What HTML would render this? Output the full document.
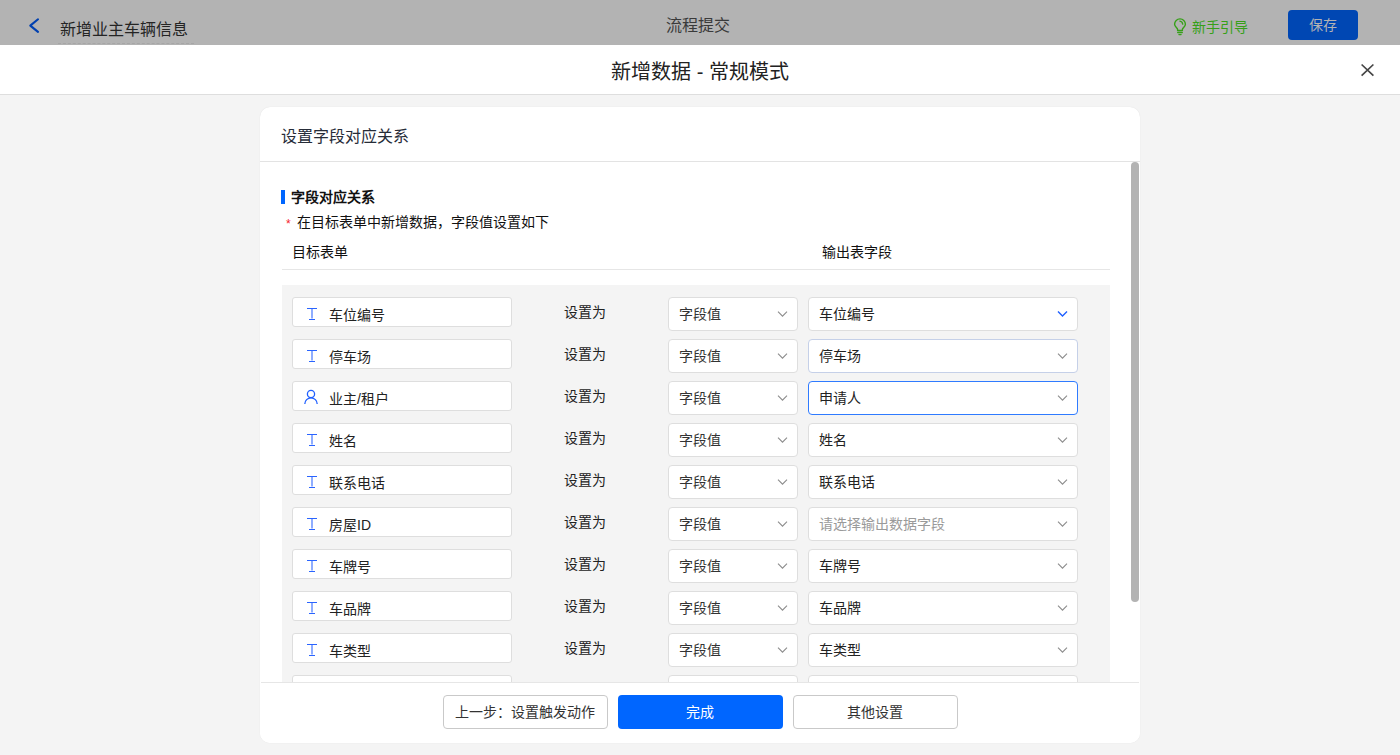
<!DOCTYPE html>
<html lang="zh-CN"><head><meta charset="utf-8">
<style>
*{box-sizing:border-box;margin:0;padding:0}
html,body{width:1400px;height:755px;overflow:hidden}
body{position:relative;background:#f4f4f4;font-family:"Liberation Sans",sans-serif;color:#333;font-size:14px}
.abs{position:absolute}
.t{position:absolute;white-space:nowrap;line-height:20px}
#top{left:0;top:0;width:1400px;height:45px;background:#b3b3b3}
#hdr{left:0;top:45px;width:1400px;height:50px;background:#fff;border-bottom:1px solid #dedede}
#card{left:260px;top:107px;width:880px;height:636px;background:#fff;border-radius:10px;box-shadow:0 0 1px rgba(0,0,0,.12)}
.inp{position:absolute;left:292px;width:220px;height:30px;background:#fff;border:1px solid #dedede;border-radius:3px}
.sel{position:absolute;height:34px;background:#fff;border:1px solid #dedede;border-radius:4px}
.chev{position:absolute;width:10px;height:6px}
.btn{position:absolute;top:695px;height:34px;width:165px;border-radius:4px;text-align:center;line-height:32px;font-size:14px;padding-right:2px}
</style></head>
<body>
<div id="top" class="abs">
  <svg class="abs" style="left:28px;top:17px" width="12" height="17" viewBox="0 0 12 17"><path d="M10 2.3 L2.3 8.6 L10 14.9" fill="none" stroke="#0040b0" stroke-width="2.1" stroke-linecap="round" stroke-linejoin="round"/></svg>
  <div class="t" style="left:60px;top:19px;font-size:16px;line-height:22px;color:#242424">新增业主车辆信息</div>
  <div class="abs" style="left:58px;top:43px;width:136px;height:0;border-top:1px dashed #a6a6a6"></div>
  <div class="t" style="left:666px;top:15px;font-size:16px;line-height:22px;color:#3a3a3a">流程提交</div>
  <svg class="abs" style="left:1168px;top:14px" width="24" height="24" viewBox="0 0 24 24"><path d="M9.6 16.5 V15.6 C9.6 13.9 6.6 13 6.6 10.3 A5.4 5.4 0 0 1 17.4 10.3 C17.4 13 14.4 13.9 14.4 15.6 V16.5 Z" fill="none" stroke="#36a018" stroke-width="1.4" stroke-linejoin="round"/><path d="M9.7 18.5 H14.3 M10.9 20.6 H13.1" stroke="#36a018" stroke-width="1.3" stroke-linecap="round"/><path d="M11.9 7.2 A3.3 3.3 0 0 1 14.7 10.2" fill="none" stroke="#36a018" stroke-width="1.3" stroke-linecap="round"/></svg>
  <div class="t" style="left:1192px;top:17px;font-size:14px;color:#36a018">新手引导</div>
  <div class="abs" style="left:1288px;top:10px;width:70px;height:30px;background:#0047b3;border-radius:4px;color:#b3b3b3;text-align:center;line-height:30px;font-size:14px">保存</div>
</div>
<div id="hdr" class="abs">
  <div class="t" style="left:0;width:1400px;text-align:center;top:14px;font-size:20px;line-height:26px;color:#222">新增数据 - 常规模式</div>
  <svg class="abs" style="left:1360px;top:18px" width="15" height="14" viewBox="0 0 15 14"><path d="M1.6 1.5 L13.4 12.7 M13.4 1.5 L1.6 12.7" stroke="#464646" stroke-width="1.7"/></svg>
</div>
<div id="card" class="abs"></div>
<div class="t" style="left:281px;top:126px;font-size:16px;line-height:22px;color:#262c38">设置字段对应关系</div>
<div class="abs" style="left:260px;top:161px;width:880px;height:1px;background:#e3e3e3"></div>
<div class="abs" style="left:1131px;top:162px;width:8px;height:440px;border-radius:4px;background:#b3b3b3"></div>

<div class="abs" style="left:281px;top:190px;width:4px;height:14px;background:#0066ff"></div>
<div class="t" style="left:291px;top:187px;font-weight:bold;color:#111">字段对应关系</div>
<div class="t" style="left:286px;top:214px;color:#f5222d;font-size:12px">*</div>
<div class="t" style="left:297px;top:212px;color:#111">在目标表单中新增数据，字段值设置如下</div>
<div class="t" style="left:292px;top:242px;color:#111">目标表单</div>
<div class="t" style="left:822px;top:242px;color:#111">输出表字段</div>
<div class="abs" style="left:282px;top:269px;width:828px;height:1px;background:#e6e6e6"></div>
<div class="abs" style="left:282px;top:285px;width:828px;height:397px;background:#f4f4f4"></div>

<!--ROWS-->
<div class="inp" style="top:297px"></div>
<svg class="abs" style="left:306px;top:307px" width="12" height="14" viewBox="0 0 12 14"><path d="M1 1.5 H11 M6 1.5 V11.5 M3 12.5 H9" fill="none" stroke="#2a64ff" stroke-width="1.05"/></svg>
<div class="t" style="left:329px;top:305px;color:#222">车位编号</div>
<div class="t" style="left:564px;top:302px;color:#222">设置为</div>
<div class="sel" style="left:668px;top:297px;width:130px"></div>
<div class="sel" style="left:808px;top:297px;width:270px;border-color:#dedede"></div>
<div class="t" style="left:679px;top:304px">字段值</div>
<svg class="abs" style="left:777px;top:311px" width="11" height="7" viewBox="0 0 11 7"><path d="M1 0.6 L5.5 5.1 L10 0.6" fill="none" stroke="#8c8c8c" stroke-width="1.1"/></svg>
<div class="t" style="left:819px;top:304px;color:#222">车位编号</div>
<svg class="abs" style="left:1057px;top:311px" width="11" height="7" viewBox="0 0 11 7"><path d="M1 0.6 L5.5 5.1 L10 0.6" fill="none" stroke="#1f5fff" stroke-width="1.4"/></svg>
<div class="inp" style="top:339px"></div>
<svg class="abs" style="left:306px;top:349px" width="12" height="14" viewBox="0 0 12 14"><path d="M1 1.5 H11 M6 1.5 V11.5 M3 12.5 H9" fill="none" stroke="#2a64ff" stroke-width="1.05"/></svg>
<div class="t" style="left:329px;top:347px;color:#222">停车场</div>
<div class="t" style="left:564px;top:344px;color:#222">设置为</div>
<div class="sel" style="left:668px;top:339px;width:130px"></div>
<div class="sel" style="left:808px;top:339px;width:270px;border-color:#c5d0e8"></div>
<div class="t" style="left:679px;top:346px">字段值</div>
<svg class="abs" style="left:777px;top:353px" width="11" height="7" viewBox="0 0 11 7"><path d="M1 0.6 L5.5 5.1 L10 0.6" fill="none" stroke="#8c8c8c" stroke-width="1.1"/></svg>
<div class="t" style="left:819px;top:346px;color:#222">停车场</div>
<svg class="abs" style="left:1057px;top:353px" width="11" height="7" viewBox="0 0 11 7"><path d="M1 0.6 L5.5 5.1 L10 0.6" fill="none" stroke="#8c8c8c" stroke-width="1.1"/></svg>
<div class="inp" style="top:381px"></div>
<svg class="abs" style="left:303px;top:389px" width="16" height="16" viewBox="0 0 16 16"><circle cx="8" cy="5" r="3.6" fill="none" stroke="#1f5fff" stroke-width="1.3"/><path d="M1.8 15 A6.2 6.2 0 0 1 14.2 15" fill="none" stroke="#1f5fff" stroke-width="1.3"/></svg>
<div class="t" style="left:329px;top:389px;color:#222">业主/租户</div>
<div class="t" style="left:564px;top:386px;color:#222">设置为</div>
<div class="sel" style="left:668px;top:381px;width:130px"></div>
<div class="sel" style="left:808px;top:381px;width:270px;border-color:#2f7bff"></div>
<div class="t" style="left:679px;top:388px">字段值</div>
<svg class="abs" style="left:777px;top:395px" width="11" height="7" viewBox="0 0 11 7"><path d="M1 0.6 L5.5 5.1 L10 0.6" fill="none" stroke="#8c8c8c" stroke-width="1.1"/></svg>
<div class="t" style="left:819px;top:388px;color:#222">申请人</div>
<svg class="abs" style="left:1057px;top:395px" width="11" height="7" viewBox="0 0 11 7"><path d="M1 0.6 L5.5 5.1 L10 0.6" fill="none" stroke="#8c8c8c" stroke-width="1.1"/></svg>
<div class="inp" style="top:423px"></div>
<svg class="abs" style="left:306px;top:433px" width="12" height="14" viewBox="0 0 12 14"><path d="M1 1.5 H11 M6 1.5 V11.5 M3 12.5 H9" fill="none" stroke="#2a64ff" stroke-width="1.05"/></svg>
<div class="t" style="left:329px;top:431px;color:#222">姓名</div>
<div class="t" style="left:564px;top:428px;color:#222">设置为</div>
<div class="sel" style="left:668px;top:423px;width:130px"></div>
<div class="sel" style="left:808px;top:423px;width:270px;border-color:#dedede"></div>
<div class="t" style="left:679px;top:430px">字段值</div>
<svg class="abs" style="left:777px;top:437px" width="11" height="7" viewBox="0 0 11 7"><path d="M1 0.6 L5.5 5.1 L10 0.6" fill="none" stroke="#8c8c8c" stroke-width="1.1"/></svg>
<div class="t" style="left:819px;top:430px;color:#222">姓名</div>
<svg class="abs" style="left:1057px;top:437px" width="11" height="7" viewBox="0 0 11 7"><path d="M1 0.6 L5.5 5.1 L10 0.6" fill="none" stroke="#8c8c8c" stroke-width="1.1"/></svg>
<div class="inp" style="top:465px"></div>
<svg class="abs" style="left:306px;top:475px" width="12" height="14" viewBox="0 0 12 14"><path d="M1 1.5 H11 M6 1.5 V11.5 M3 12.5 H9" fill="none" stroke="#2a64ff" stroke-width="1.05"/></svg>
<div class="t" style="left:329px;top:473px;color:#222">联系电话</div>
<div class="t" style="left:564px;top:470px;color:#222">设置为</div>
<div class="sel" style="left:668px;top:465px;width:130px"></div>
<div class="sel" style="left:808px;top:465px;width:270px;border-color:#dedede"></div>
<div class="t" style="left:679px;top:472px">字段值</div>
<svg class="abs" style="left:777px;top:479px" width="11" height="7" viewBox="0 0 11 7"><path d="M1 0.6 L5.5 5.1 L10 0.6" fill="none" stroke="#8c8c8c" stroke-width="1.1"/></svg>
<div class="t" style="left:819px;top:472px;color:#222">联系电话</div>
<svg class="abs" style="left:1057px;top:479px" width="11" height="7" viewBox="0 0 11 7"><path d="M1 0.6 L5.5 5.1 L10 0.6" fill="none" stroke="#8c8c8c" stroke-width="1.1"/></svg>
<div class="inp" style="top:507px"></div>
<svg class="abs" style="left:306px;top:517px" width="12" height="14" viewBox="0 0 12 14"><path d="M1 1.5 H11 M6 1.5 V11.5 M3 12.5 H9" fill="none" stroke="#2a64ff" stroke-width="1.05"/></svg>
<div class="t" style="left:329px;top:515px;color:#222">房屋ID</div>
<div class="t" style="left:564px;top:512px;color:#222">设置为</div>
<div class="sel" style="left:668px;top:507px;width:130px"></div>
<div class="sel" style="left:808px;top:507px;width:270px;border-color:#dedede"></div>
<div class="t" style="left:679px;top:514px">字段值</div>
<svg class="abs" style="left:777px;top:521px" width="11" height="7" viewBox="0 0 11 7"><path d="M1 0.6 L5.5 5.1 L10 0.6" fill="none" stroke="#8c8c8c" stroke-width="1.1"/></svg>
<div class="t" style="left:819px;top:514px;color:#9a9a9a">请选择输出数据字段</div>
<svg class="abs" style="left:1057px;top:521px" width="11" height="7" viewBox="0 0 11 7"><path d="M1 0.6 L5.5 5.1 L10 0.6" fill="none" stroke="#8c8c8c" stroke-width="1.1"/></svg>
<div class="inp" style="top:549px"></div>
<svg class="abs" style="left:306px;top:559px" width="12" height="14" viewBox="0 0 12 14"><path d="M1 1.5 H11 M6 1.5 V11.5 M3 12.5 H9" fill="none" stroke="#2a64ff" stroke-width="1.05"/></svg>
<div class="t" style="left:329px;top:557px;color:#222">车牌号</div>
<div class="t" style="left:564px;top:554px;color:#222">设置为</div>
<div class="sel" style="left:668px;top:549px;width:130px"></div>
<div class="sel" style="left:808px;top:549px;width:270px;border-color:#dedede"></div>
<div class="t" style="left:679px;top:556px">字段值</div>
<svg class="abs" style="left:777px;top:563px" width="11" height="7" viewBox="0 0 11 7"><path d="M1 0.6 L5.5 5.1 L10 0.6" fill="none" stroke="#8c8c8c" stroke-width="1.1"/></svg>
<div class="t" style="left:819px;top:556px;color:#222">车牌号</div>
<svg class="abs" style="left:1057px;top:563px" width="11" height="7" viewBox="0 0 11 7"><path d="M1 0.6 L5.5 5.1 L10 0.6" fill="none" stroke="#8c8c8c" stroke-width="1.1"/></svg>
<div class="inp" style="top:591px"></div>
<svg class="abs" style="left:306px;top:601px" width="12" height="14" viewBox="0 0 12 14"><path d="M1 1.5 H11 M6 1.5 V11.5 M3 12.5 H9" fill="none" stroke="#2a64ff" stroke-width="1.05"/></svg>
<div class="t" style="left:329px;top:599px;color:#222">车品牌</div>
<div class="t" style="left:564px;top:596px;color:#222">设置为</div>
<div class="sel" style="left:668px;top:591px;width:130px"></div>
<div class="sel" style="left:808px;top:591px;width:270px;border-color:#dedede"></div>
<div class="t" style="left:679px;top:598px">字段值</div>
<svg class="abs" style="left:777px;top:605px" width="11" height="7" viewBox="0 0 11 7"><path d="M1 0.6 L5.5 5.1 L10 0.6" fill="none" stroke="#8c8c8c" stroke-width="1.1"/></svg>
<div class="t" style="left:819px;top:598px;color:#222">车品牌</div>
<svg class="abs" style="left:1057px;top:605px" width="11" height="7" viewBox="0 0 11 7"><path d="M1 0.6 L5.5 5.1 L10 0.6" fill="none" stroke="#8c8c8c" stroke-width="1.1"/></svg>
<div class="inp" style="top:633px"></div>
<svg class="abs" style="left:306px;top:643px" width="12" height="14" viewBox="0 0 12 14"><path d="M1 1.5 H11 M6 1.5 V11.5 M3 12.5 H9" fill="none" stroke="#2a64ff" stroke-width="1.05"/></svg>
<div class="t" style="left:329px;top:641px;color:#222">车类型</div>
<div class="t" style="left:564px;top:638px;color:#222">设置为</div>
<div class="sel" style="left:668px;top:633px;width:130px"></div>
<div class="sel" style="left:808px;top:633px;width:270px;border-color:#dedede"></div>
<div class="t" style="left:679px;top:640px">字段值</div>
<svg class="abs" style="left:777px;top:647px" width="11" height="7" viewBox="0 0 11 7"><path d="M1 0.6 L5.5 5.1 L10 0.6" fill="none" stroke="#8c8c8c" stroke-width="1.1"/></svg>
<div class="t" style="left:819px;top:640px;color:#222">车类型</div>
<svg class="abs" style="left:1057px;top:647px" width="11" height="7" viewBox="0 0 11 7"><path d="M1 0.6 L5.5 5.1 L10 0.6" fill="none" stroke="#8c8c8c" stroke-width="1.1"/></svg>
<div class="inp" style="top:675px"></div>
<div class="sel" style="left:668px;top:675px;width:130px"></div>
<div class="sel" style="left:808px;top:675px;width:270px;border-color:#dedede"></div>
<!--/ROWS-->

<div class="abs" style="left:261px;top:682px;width:878px;height:1px;background:#e6e6e6"></div>
<div class="abs" style="left:260px;top:683px;width:880px;height:60px;background:#fff;border-radius:0 0 10px 10px"></div>
<div class="btn" style="left:443px;border:1px solid #c9c9c9;background:#fff;color:#333">上一步：设置触发动作</div>
<div class="btn" style="left:618px;background:#0066ff;color:#fff;line-height:34px">完成</div>
<div class="btn" style="left:793px;border:1px solid #c9c9c9;background:#fff;color:#333">其他设置</div>
</body></html>
